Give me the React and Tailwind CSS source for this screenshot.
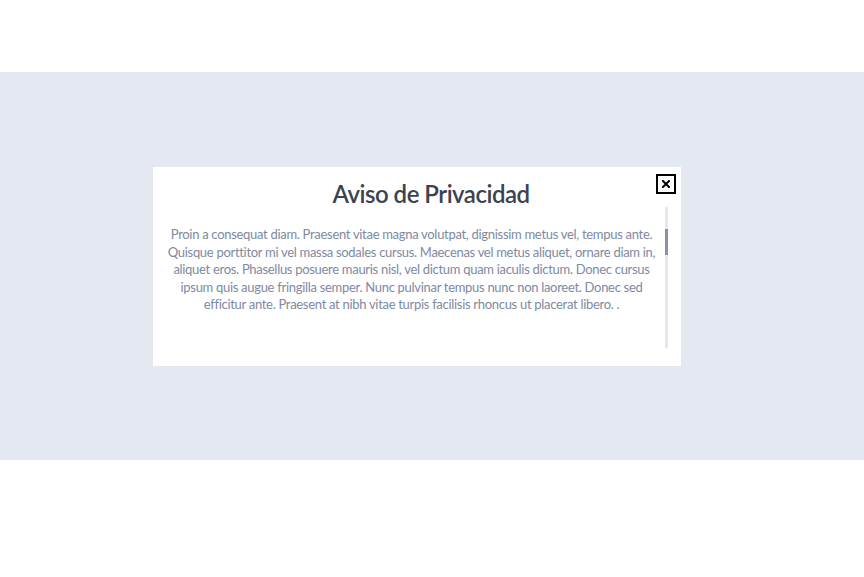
export default function App() {
  return (
    <div className="w-[864px] h-[577px] bg-white flex flex-col" style={{ fontFamily: "Lato, 'Noto Sans', sans-serif" }}>
      <div className="h-[72px] bg-white" />
      <div className="h-[388px] bg-[#e4e8f0] flex items-start pt-[95px] pl-[153px]">
        <div className="relative w-[528px] h-[199px] bg-white flex flex-col pt-[14px] pl-[7px] pr-[13px]">
          <h1 className="pl-[34px] text-center text-[24px] leading-[26px] font-semibold tracking-[-0.5px] text-[#3b4350]">Aviso de Privacidad</h1>
          <div className="flex h-[141px] mt-0">
            <p className="flex-1 pt-[19px] text-center text-[13px] leading-[17.5px] tracking-[-0.3px] text-[#7e89a2]">
              Proin a consequat diam. Praesent vitae magna volutpat, dignissim metus vel, tempus ante. Quisque porttitor mi vel massa sodales cursus. Maecenas vel metus aliquet, ornare diam in, aliquet eros. Phasellus posuere mauris nisl, vel dictum quam iaculis dictum. Donec cursus ipsum quis augue fringilla semper. Nunc pulvinar tempus nunc non laoreet. Donec sed efficitur ante. Praesent at nibh vitae turpis facilisis rhoncus ut placerat libero. .
            </p>
            <div className="w-[3px] ml-[2px] bg-[#e4e8f0] flex flex-col">
              <div className="h-[22px]" />
              <div className="h-[26px] bg-[#8a93a5]" />
            </div>
          </div>
          <button className="absolute top-[7px] right-[5px] w-[20px] h-[20px] border-2 border-black bg-white flex items-center justify-center">
            <svg width="8" height="8" viewBox="0 0 8 8">
              <path d="M1 1L7 7M7 1L1 7" stroke="#000" strokeWidth="2" strokeLinecap="square" />
            </svg>
          </button>
        </div>
      </div>
      <div className="flex-1 bg-white" />
    </div>
  );
}
